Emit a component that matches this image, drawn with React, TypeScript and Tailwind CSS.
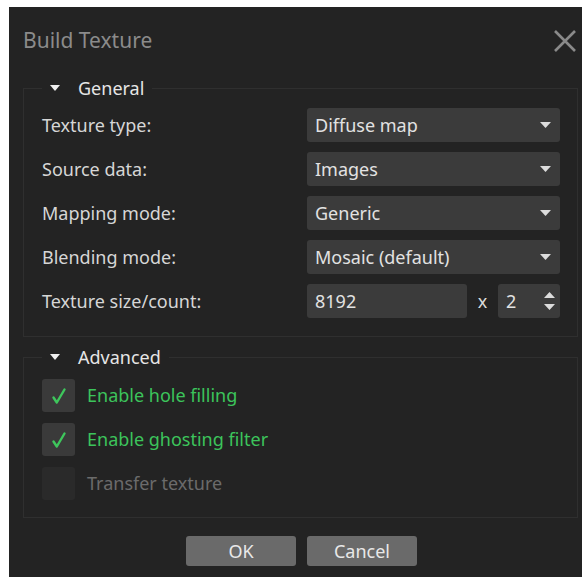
import React, { useState } from 'react';

const FONT = { fontFamily: '"Noto Sans", "Open Sans", sans-serif' };

const DownTriangle: React.FC<{ className?: string }> = ({ className }) => (
    <svg width="11" height="6" viewBox="0 0 11 6" className={className}>
        <path d="M0 0 L11 0 L5.5 6 Z" fill="currentColor" />
    </svg>
);

const Select: React.FC<{ value: string }> = ({ value }) => (
    <div className="h-[34px] bg-[#3b3b3b] rounded-[3px] flex items-center justify-between pl-[8px] pr-[9px] text-[#e2e2e2]">
        <span>{value}</span>
        <DownTriangle className="text-[#dcdcdc]" />
    </div>
);

const GroupTitle: React.FC<{ title: string }> = ({ title }) => (
    <legend className="px-[8px] h-[24px] flex items-center gap-[18px] text-[#e6e6e6]">
        <svg width="10" height="6" viewBox="0 0 10 6">
            <path d="M0 0 L10 0 L5 6 Z" fill="#f0f0f0" />
        </svg>
        <span>{title}</span>
    </legend>
);

const Checkbox: React.FC<{ label: string; checked: boolean; disabled?: boolean; onToggle?: () => void }> = ({ label, checked, disabled, onToggle }) => (
    <button type="button" onClick={onToggle} disabled={disabled} className="flex items-center gap-[12px] h-[33px] text-left">
        <span className={`w-[33px] h-[33px] rounded-[3px] flex items-center justify-center ${disabled ? 'bg-[#2a2a2a]' : 'bg-[#3a3a3a]'}`}>
            {checked && (
                <svg width="18" height="18" viewBox="0 0 18 18">
                    <path d="M3.5 10.5 L6.8 15.5 L14.5 2.5" fill="none" stroke="#3ec65c" strokeWidth="2.4" strokeLinecap="round" strokeLinejoin="round" />
                </svg>
            )}
        </span>
        <span className={disabled ? 'text-[#6b6b6b]' : 'text-[#3cc45b]'}>{label}</span>
    </button>
);

const ROWS = [
    { label: 'Texture type:', value: 'Diffuse map' },
    { label: 'Source data:', value: 'Images' },
    { label: 'Mapping mode:', value: 'Generic' },
    { label: 'Blending mode:', value: 'Mosaic (default)' },
];

export default function App() {
    const [holeFilling, setHoleFilling] = useState(true);
    const [ghosting, setGhosting] = useState(true);

    return (
        <div className="w-[582px] h-[577px] bg-white overflow-hidden pt-[7px] pl-[9px] text-[18px]" style={FONT}>
            <div className="w-[585px] h-[570px] bg-[#232323] flex flex-col">
                {/* title bar */}
                <div className="h-[69px] flex items-start justify-between pl-[14px] pr-[14px] pt-[18px]">
                    <span className="text-[21px] leading-[30px] text-[#8b8b8b]">Build Texture</span>
                    <svg width="24" height="24" viewBox="0 0 24 24" className="mt-[4px] mr-[3px]">
                        <path d="M2 2 L22 22 M22 2 L2 22" stroke="#8a8a8a" strokeWidth="2.6" />
                    </svg>
                </div>

                <fieldset className="ml-[14px] mr-[16px] border border-[#2f2f2f] pl-[18px] pr-[17px] pt-[8px] pb-[18px]">
                    <GroupTitle title="General" />
                    <div className="grid grid-cols-[1fr_253px] gap-y-[10px] items-center">
                        {ROWS.map(r => (
                            <React.Fragment key={r.label}>
                                <span className="text-[#d6d6d6]">{r.label}</span>
                                <Select value={r.value} />
                            </React.Fragment>
                        ))}
                        <span className="text-[#d6d6d6]">Texture size/count:</span>
                        <div className="flex items-center h-[34px]">
                            <div className="w-[160px] h-full bg-[#3b3b3b] rounded-[3px] flex items-center pl-[8px] text-[#e2e2e2]">8192</div>
                            <span className="w-[31px] text-center text-[#dcdcdc]">x</span>
                            <div className="flex-1 h-full bg-[#3b3b3b] rounded-[3px] flex items-center justify-between pl-[8px] pr-[5px] text-[#e2e2e2]">
                                <span>2</span>
                                <svg width="11" height="22" viewBox="0 0 11 22">
                                    <path d="M0 8 L11 8 L5.5 2 Z M0 14 L11 14 L5.5 20 Z" fill="#dcdcdc" />
                                </svg>
                            </div>
                        </div>
                    </div>
                </fieldset>

                <fieldset className="mt-[8px] ml-[14px] mr-[16px] border border-[#2f2f2f] pl-[18px] pt-[10px] pb-[17px]">
                    <GroupTitle title="Advanced" />
                    <div className="flex flex-col gap-[11px]">
                        <Checkbox label="Enable hole filling" checked={holeFilling} onToggle={() => setHoleFilling(v => !v)} />
                        <Checkbox label="Enable ghosting filter" checked={ghosting} onToggle={() => setGhosting(v => !v)} />
                        <Checkbox label="Transfer texture" checked={false} disabled />
                    </div>
                </fieldset>

                <div className="flex justify-center gap-[11px] mt-[18px]">
                    <button type="button" className="w-[110px] h-[30px] bg-[#6a6a6a] rounded-[3px] text-[#e8e8e8]">OK</button>
                    <button type="button" className="w-[110px] h-[30px] bg-[#6a6a6a] rounded-[3px] text-[#e8e8e8]">Cancel</button>
                </div>
            </div>
        </div>
    );
}
